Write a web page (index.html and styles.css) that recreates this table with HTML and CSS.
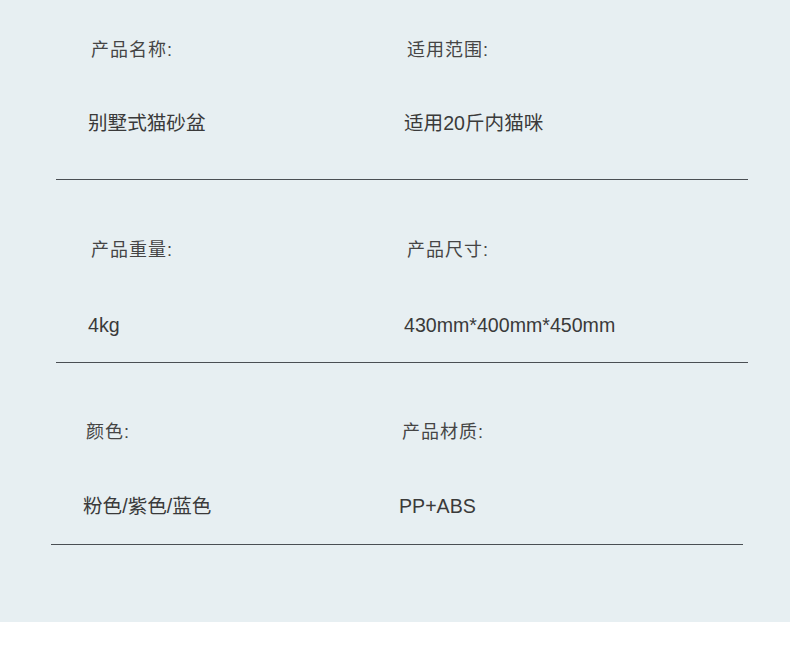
FILE: index.html
```html
<!DOCTYPE html>
<html lang="zh-CN">
<head>
<meta charset="utf-8">
<title>产品参数</title>
<link rel="stylesheet" href="styles.css">
</head>
<body>
<div class="sheet">
  <section class="spec spec--first">
    <div class="row">
      <div class="label">产品名称:</div>
      <div class="label">适用范围:</div>
    </div>
    <div class="row row--value">
      <div class="value">别墅式猫砂盆</div>
      <div class="value">适用20斤内猫咪</div>
    </div>
  </section>
  <section class="spec spec--second">
    <div class="row">
      <div class="label">产品重量:</div>
      <div class="label">产品尺寸:</div>
    </div>
    <div class="row row--value">
      <div class="value">4kg</div>
      <div class="value">430mm*400mm*450mm</div>
    </div>
  </section>
  <section class="spec spec--third">
    <div class="row">
      <div class="label">颜色:</div>
      <div class="label">产品材质:</div>
    </div>
    <div class="row row--value">
      <div class="value">粉色/紫色/蓝色</div>
      <div class="value">PP+ABS</div>
    </div>
  </section>
</div>
</body>
</html>
```

FILE: styles.css
```css
html, body {
  margin: 0;
  padding: 0;
  background: #ffffff;
}

body {
  font-family: "Liberation Sans", "Noto Sans CJK SC", sans-serif;
  color: #3a3a3a;
}

.sheet {
  background: #e7eff2;
  height: 622px;
  overflow: hidden;
}

.spec {
  margin-left: 56px;
  width: 692px;
  border-bottom: 1px solid #4a4f54;
}

.spec--first {
  padding-top: 38px;
  padding-bottom: 44px;
}

.spec--second {
  padding-top: 58px;
  padding-bottom: 25px;
}

.spec--third {
  margin-left: 51px;
  padding-top: 57px;
  padding-bottom: 26px;
}

.row {
  display: grid;
  grid-template-columns: 316px 1fr;
  height: 24px;
}

.row--value {
  margin-top: 49px;
}

.spec--second .row--value {
  margin-top: 51px;
}

.spec--third .row--value {
  margin-top: 50px;
}

.label {
  padding-left: 35px;
  font-size: 18px;
  line-height: 24px;
  letter-spacing: 1px;
  color: #454545;
  white-space: nowrap;
}

.value {
  padding-left: 32px;
  font-size: 19.6px;
  line-height: 24px;
  color: #3a3a3a;
  white-space: nowrap;
}
```
